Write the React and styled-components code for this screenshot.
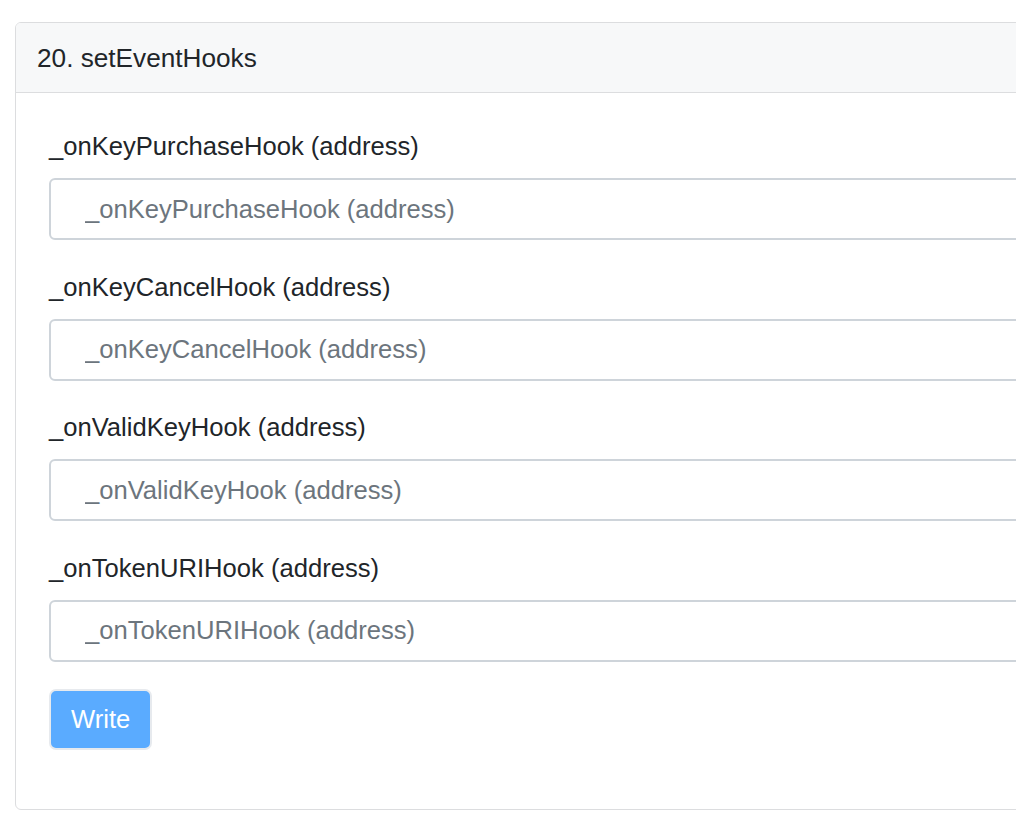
import styled, { createGlobalStyle } from "styled-components";

const GlobalStyle = createGlobalStyle`
  body {
    margin: 0;
    background: #ffffff;
    overflow: hidden;
    font-family: "Liberation Sans", Arial, Helvetica, sans-serif;
    color: #212529;
  }
`;

const Page = styled.div`
  padding: 22px 0 0 15px;
`;

const Card = styled.div`
  width: 1060px;
  border: 1px solid #dcdddf;
  border-radius: 6px;
  background: #ffffff;
  overflow: hidden;
`;

const CardHeader = styled.div`
  padding: 20px 21px;
  font-size: 26.2px;
  line-height: 30px;
  height: 29px;
  color: #212529;
  background: #f7f8f9;
  border-bottom: 1px solid #dcdddf;
`;

const CardBody = styled.div`
  padding: 38px 33px 59px 33px;
`;

const FieldGroup = styled.div`
  display: flex;
  flex-direction: column;
  margin-bottom: 31.5px;

  &:last-of-type {
    margin-bottom: 27px;
  }
`;

const Label = styled.label`
  font-size: 25.6px;
  line-height: 30px;
  margin-bottom: 17px;
  color: #212529;
`;

const Input = styled.input`
  box-sizing: border-box;
  height: 62px;
  width: 100%;
  padding: 0 34px;
  font-family: inherit;
  font-size: 25.6px;
  color: #495057;
  background: #ffffff;
  border: 2px solid #ced4da;
  border-radius: 6px;
  outline: none;

  &::placeholder {
    color: #6c757d;
    opacity: 1;
  }
`;

const WriteButton = styled.button`
  box-sizing: border-box;
  height: 61px;
  padding: 0 20px;
  font-family: inherit;
  font-size: 25.6px;
  color: #ffffff;
  background: #5aabff;
  border: 2px solid #e7eaee;
  border-radius: 7px;
  cursor: pointer;
`;

const fields = [
  "_onKeyPurchaseHook (address)",
  "_onKeyCancelHook (address)",
  "_onValidKeyHook (address)",
  "_onTokenURIHook (address)",
];

export default function App() {
  return (
    <>
      <GlobalStyle />
      <Page>
        <Card>
          <CardHeader>20. setEventHooks</CardHeader>
          <CardBody>
            {fields.map((name) => (
              <FieldGroup key={name}>
                <Label>{name}</Label>
                <Input placeholder={name} />
              </FieldGroup>
            ))}
            <WriteButton>Write</WriteButton>
          </CardBody>
        </Card>
      </Page>
    </>
  );
}
